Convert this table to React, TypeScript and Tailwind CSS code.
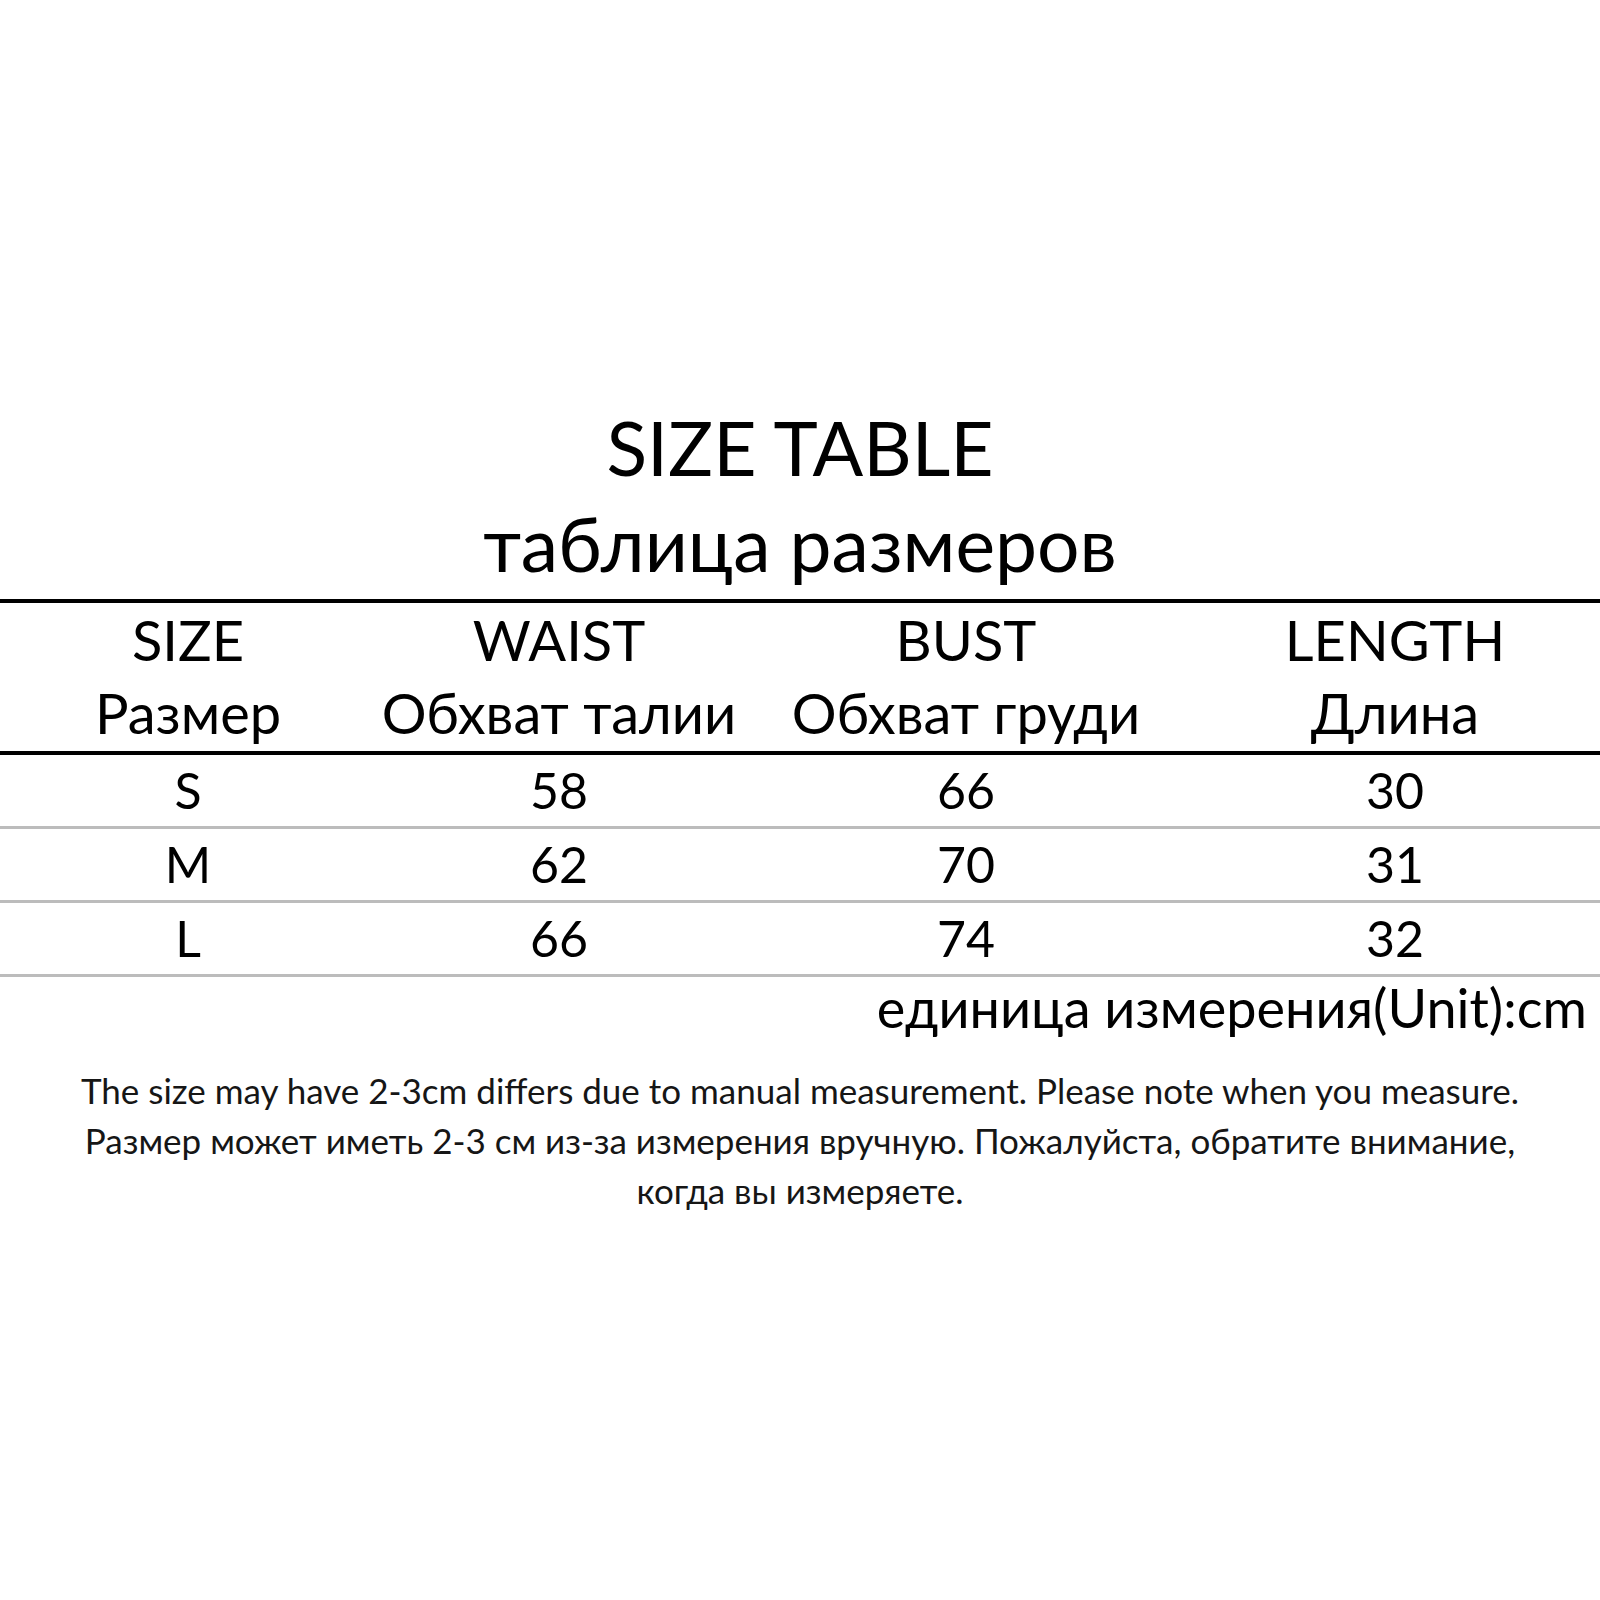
import React from "react";

const rows = [
  { size: "S", waist: "58", bust: "66", length: "30" },
  { size: "M", waist: "62", bust: "70", length: "31" },
  { size: "L", waist: "66", bust: "74", length: "32" },
];

const cols = "grid grid-cols-[376px_366px_448px_410px]";

const App = () => {
  return (
    <div className="w-[1600px] h-[1600px] bg-white text-black font-['Lato','Noto_Sans',sans-serif] pt-[399px]">
      <div className="flex flex-col items-center text-[75px] leading-[96px]">
        <div>SIZE TABLE</div>
        <div>таблица размеров</div>
      </div>

      <div className="mt-[8px]">
        {/* header */}
        <div className={`${cols} border-t-[4px] border-b-[4px] border-black pb-[2px]`}>
          {[
            ["SIZE", "Размер"],
            ["WAIST", "Обхват талии"],
            ["BUST", "Обхват груди"],
            ["LENGTH", "Длина"],
          ].map(([en, ru]) => (
            <div key={en} className="flex flex-col items-center whitespace-nowrap text-[56px] leading-[73px]">
              <span>{en}</span>
              <span>{ru}</span>
            </div>
          ))}
        </div>

        {rows.map((r) => (
          <div key={r.size} className={`${cols} border-b-[3px] border-[#bcbcbc]`}>
            {[r.size, r.waist, r.bust, r.length].map((v, i) => (
              <div key={i} className="text-center text-[50px] leading-[71px]">
                {v}
              </div>
            ))}
          </div>
        ))}
      </div>

      <div className="flex justify-end pr-[13px] text-[54px] leading-[62px] whitespace-nowrap">
        единица измерения(Unit):cm
      </div>

      <div className="mt-[26px] flex flex-col items-center whitespace-nowrap text-[35px] leading-[50px] text-[#161616]">
        <div>The size may have 2-3cm differs due to manual measurement. Please note when you measure.</div>
        <div>Размер может иметь 2-3 см из-за измерения вручную. Пожалуйста, обратите внимание,</div>
        <div>когда вы измеряете.</div>
      </div>
    </div>
  );
};

export default App;
